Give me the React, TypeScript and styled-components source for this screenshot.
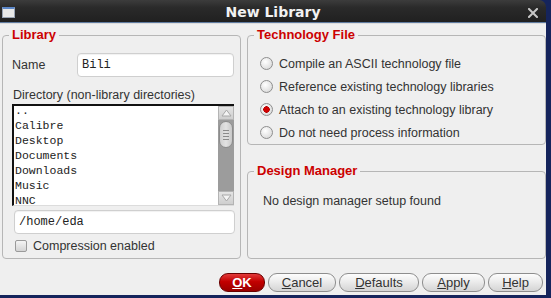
import styled, { createGlobalStyle } from "styled-components";

const GlobalStyle = createGlobalStyle`
  html, body {
    margin: 0;
    padding: 0;
    background: #15245c;
  }
  body {
    font-family: "Liberation Sans", Arial, sans-serif;
    color: #333;
  }
  * {
    box-sizing: border-box;
  }
`;

const directories = ["..", "Calibre", "Desktop", "Documents", "Downloads", "Music", "NNC"];

const techOptions = [
  { label: "Compile an ASCII technology file", checked: false },
  { label: "Reference existing technology libraries", checked: false },
  { label: "Attach to an existing technology library", checked: true },
  { label: "Do not need process information", checked: false },
];

const buttons = [
  { key: "O", rest: "K", width: 46, primary: true },
  { key: "C", rest: "ancel", width: 68 },
  { key: "D", rest: "efaults", width: 80 },
  { key: "A", rest: "pply", width: 63 },
  { key: "H", rest: "elp", width: 55 },
];

const App = () => {
  return (
    <Window>
      <GlobalStyle />
      <TitleBar>
        <WinIcon />
        <Title>New Library</Title>
        <CloseBtn>
          <svg width="10" height="10" viewBox="0 0 10 10">
            <path d="M1 1 L9 9 M9 1 L1 9" stroke="#c8c8c8" strokeWidth="2" strokeLinecap="square" />
          </svg>
        </CloseBtn>
      </TitleBar>
      <Body>
        <Columns>
          <Group $height={231}>
            <Legend>Library</Legend>
            <LibraryContent>
              <NameRow>
                <Label>Name</Label>
                <TextField $width={157}>Bili</TextField>
              </NameRow>
              <DirLabel>Directory (non-library directories)</DirLabel>
              <ListBox>
                <ListItems>
                  {directories.map((d) => (
                    <ListItem key={d}>{d}</ListItem>
                  ))}
                </ListItems>
                <ScrollBar>
                  <ScrollArrow>
                    <svg width="11" height="8" viewBox="0 0 11 8">
                      <path d="M1 7 L5.5 1 L10 7 Z" fill="#f4f4f4" stroke="#a8a8a8" />
                    </svg>
                  </ScrollArrow>
                  <Thumb>
                    <Grip />
                    <Grip />
                    <Grip />
                    <Grip />
                  </Thumb>
                  <ScrollTrack />
                  <ScrollArrow>
                    <svg width="11" height="8" viewBox="0 0 11 8">
                      <path d="M1 1 L5.5 7 L10 1 Z" fill="#f4f4f4" stroke="#a8a8a8" />
                    </svg>
                  </ScrollArrow>
                </ScrollBar>
              </ListBox>
              <PathField $width={221}>/home/eda</PathField>
              <CheckRow>
                <CheckBox />
                <Label>Compression enabled</Label>
              </CheckRow>
            </LibraryContent>
          </Group>
          <RightColumn>
            <Group $height={121}>
              <Legend>Technology File</Legend>
              <RadioList>
                {techOptions.map((o) => (
                  <RadioRow key={o.label}>
                    <Radio $checked={o.checked} />
                    <Label>{o.label}</Label>
                  </RadioRow>
                ))}
              </RadioList>
            </Group>
            <Group $height={91}>
              <Legend>Design Manager</Legend>
              <DmText>No design manager setup found</DmText>
            </Group>
          </RightColumn>
        </Columns>
        <ButtonRow>
          {buttons.map((b) => (
            <Button key={b.key} $width={b.width} $primary={b.primary}>
              <u>{b.key}</u>
              {b.rest}
            </Button>
          ))}
        </ButtonRow>
      </Body>
    </Window>
  );
};

export default App;

const Window = styled.div`
  width: 551px;
  height: 298px;
  background: #15245c;
  display: flex;
  flex-direction: column;
  overflow: hidden;
`;

const TitleBar = styled.div`
  width: 546px;
  height: 23px;
  background: linear-gradient(#3c3c3c, #2a2a2a 35%, #202020);
  border-top-right-radius: 7px;
  border-bottom: 1px solid #5f7ba0;
  display: grid;
  grid-template-columns: 22px 1fr 28px;
  align-items: center;
`;

const WinIcon = styled.div`
  width: 13px;
  height: 11px;
  margin: 3px 0 0 2px;
  background: #e8e8e8;
  border: 1px solid #9aa4b4;
  border-top: 2px solid #5a86c8;
`;

const Title = styled.div`
  text-align: center;
  color: #f2f2f2;
  font-family: "DejaVu Sans", sans-serif;
  font-weight: bold;
  font-size: 14px;
  padding-left: 6px;
  padding-top: 1px;
`;

const CloseBtn = styled.div`
  display: flex;
  align-items: center;
  justify-content: flex-start;
  padding-left: 10px;
  padding-top: 3px;
`;

const Body = styled.div`
  width: 546px;
  height: 272px;
  background: #efefef;
  border-top: 1px solid #dcdcdc;
  display: flex;
  flex-direction: column;
  padding-top: 4px;
`;

const Columns = styled.div`
  display: flex;
  gap: 6px;
  padding-left: 2px;
`;

const RightColumn = styled.div`
  display: flex;
  flex-direction: column;
  gap: 19px;
  width: 299px;
`;

const Group = styled.fieldset<{ $height: number }>`
  margin: 0;
  padding: 0;
  min-width: 0;
  flex: 1;
  max-width: 299px;
  height: ${(p) => p.$height}px;
  border: 1px solid #b6b6b6;
  border-radius: 4px;
`;

const Legend = styled.legend`
  margin-left: 6px;
  padding: 0 3px;
  font-weight: bold;
  font-size: 13px;
  line-height: 14px;
  color: #cc0000;
`;

const LibraryContent = styled.div`
  display: flex;
  flex-direction: column;
  padding: 11px 0 0 9px;
  width: 236px;
`;

const NameRow = styled.div`
  display: flex;
  align-items: center;
  justify-content: space-between;
  padding-right: 5px;
`;

const Label = styled.span`
  font-size: 12.5px;
  line-height: 14px;
  color: #333;
  white-space: nowrap;
`;

const TextField = styled.div<{ $width: number }>`
  width: ${(p) => p.$width}px;
  height: 24px;
  background: #fff;
  border: 1px solid #cfcfcf;
  border-radius: 4px;
  box-shadow: inset 0 1px 1px rgba(0, 0, 0, 0.06);
  padding: 4px 0 0 4px;
  font-family: "Liberation Mono", monospace;
  font-size: 12px;
  color: #222;
`;

const PathField = styled(TextField)`
  margin: 4px 0 0 2px;
`;

const DirLabel = styled(Label)`
  margin-top: 11px;
  padding-left: 1px;
`;

const ListBox = styled.div`
  margin-top: 2px;
  width: 222px;
  height: 102px;
  display: flex;
  background: #fff;
  border-top: 2px solid #111;
  border-left: 2px solid #111;
  border-bottom: 1px solid #dcdcdc;
  overflow: hidden;
`;

const ListItems = styled.div`
  flex: 1;
  margin-top: -3px;
  padding-left: 1px;
  font-family: "Liberation Mono", monospace;
  font-size: 11.5px;
  color: #222;
`;

const ListItem = styled.div`
  height: 15px;
  line-height: 15px;
`;

const ScrollBar = styled.div`
  width: 16px;
  display: flex;
  flex-direction: column;
  background: #9c9c9c;
`;

const ScrollArrow = styled.div`
  height: 14px;
  display: flex;
  align-items: center;
  justify-content: center;
  background: linear-gradient(#e4e4e4, #cfcfcf);
  border: 1px solid #b4b4b4;
`;

const Thumb = styled.div`
  height: 27px;
  margin: 1px 1px 0;
  border-radius: 7px;
  background: linear-gradient(90deg, #cfcfcf, #e2e2e2 50%, #c8c8c8);
  border: 1px solid #8c8c8c;
  display: flex;
  flex-direction: column;
  align-items: center;
  justify-content: center;
  gap: 2px;
`;

const Grip = styled.div`
  width: 6px;
  height: 1px;
  background: #8a8a8a;
`;

const ScrollTrack = styled.div`
  flex: 1;
`;

const CheckRow = styled.div`
  display: flex;
  align-items: center;
  gap: 6px;
  margin-top: 5px;
  padding-left: 3px;
`;

const CheckBox = styled.div`
  width: 12px;
  height: 12px;
  border: 1px solid #9a9a9a;
  border-radius: 2px;
  background: linear-gradient(#f4f4f4, #d4d4d4);
`;

const RadioList = styled.div`
  display: flex;
  flex-direction: column;
  padding: 10px 0 0 12px;
`;

const RadioRow = styled.div`
  height: 23px;
  display: flex;
  align-items: center;
  gap: 6px;
`;

const Radio = styled.div<{ $checked?: boolean }>`
  width: 13px;
  height: 13px;
  border-radius: 50%;
  border: 1px solid #8e8e8e;
  background: ${(p) =>
    p.$checked
      ? "radial-gradient(circle, #d00000 0 2.5px, #b00000 3px, transparent 3.5px), radial-gradient(circle at 40% 35%, #ffffff, #d2d2d2)"
      : "radial-gradient(circle at 40% 35%, #ffffff, #d2d2d2)"};
`;

const DmText = styled.div`
  font-size: 12.5px;
  line-height: 14px;
  padding: 16px 0 0 15px;
  color: #333;
`;

const ButtonRow = styled.div`
  display: flex;
  justify-content: flex-end;
  gap: 3px;
  padding-right: 3px;
  margin-top: 14px;
`;

const Button = styled.div<{ $width: number; $primary?: boolean }>`
  width: ${(p) => p.$width}px;
  height: 19px;
  border-radius: 9px;
  display: flex;
  align-items: center;
  justify-content: center;
  font-size: 13px;
  border: 1px solid ${(p) => (p.$primary ? "#6a0000" : "#8e8e8e")};
  color: ${(p) => (p.$primary ? "#ffffff" : "#333")};
  font-weight: ${(p) => (p.$primary ? "bold" : "normal")};
  background: ${(p) =>
    p.$primary
      ? "linear-gradient(#e23a3a, #c20000 45%, #9a0000)"
      : "linear-gradient(#fdfdfd, #ececec 45%, #d4d4d4)"};
`;
